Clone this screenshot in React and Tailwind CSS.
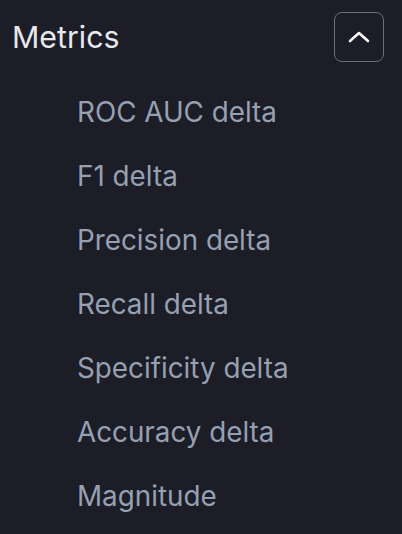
const metrics = [
  "ROC AUC delta",
  "F1 delta",
  "Precision delta",
  "Recall delta",
  "Specificity delta",
  "Accuracy delta",
  "Magnitude",
];

export default function App() {
  return (
    <div className="w-[402px] h-[534px] overflow-hidden bg-[#1c1d26] font-[Inter,'Noto_Sans',sans-serif]">
      {/* Section header */}
      <div className="flex items-center justify-between pl-3 pr-[18px] pt-3">
        <h2 className="text-[30.3px] font-normal text-[#e6e8ee] leading-none">
          Metrics
        </h2>
        <button
          type="button"
          className="w-[50px] h-[50px] flex items-center justify-center rounded-lg border-[1.5px] border-[#6b7080]"
        >
          <svg width="22" height="12" viewBox="0 0 22 12" fill="none">
            <polyline
              points="2,10 11,2 20,10"
              stroke="#ffffff"
              strokeWidth="2.6"
              strokeLinecap="round"
              strokeLinejoin="round"
            />
          </svg>
        </button>
      </div>

      {/* Metric list */}
      <ul className="mt-[19px] pl-[77px] flex flex-col">
        {metrics.map((m) => (
          <li
            key={m}
            className="h-16 flex items-center text-[27.8px] text-[#96a0b3] leading-none"
          >
            {m}
          </li>
        ))}
      </ul>
    </div>
  );
}
